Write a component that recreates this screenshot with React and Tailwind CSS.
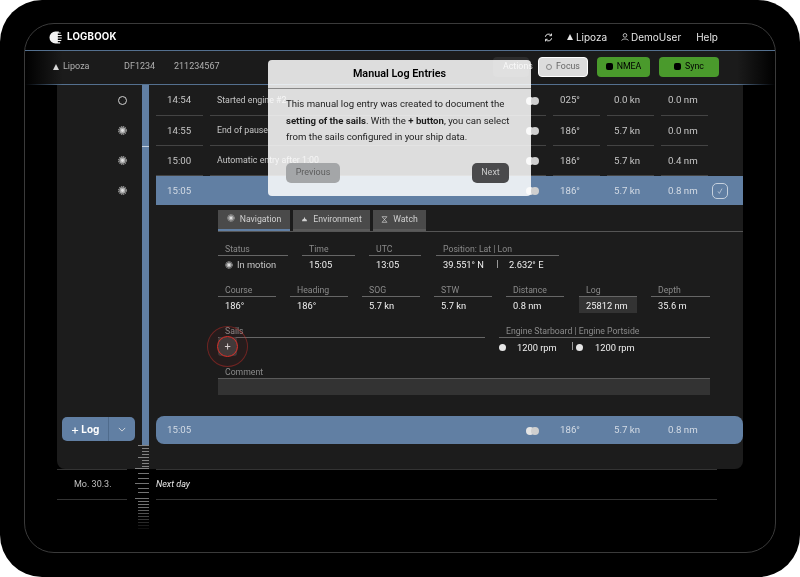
import React from "react";

const font = { fontFamily: 'Roboto, sans-serif' };

function Gear({ className = "w-[9px] h-[9px]" }) {
  return (
    <svg viewBox="0 0 10 10" className={className}>
      <circle cx="5" cy="5" r="4.3" fill="none" stroke="#9c9c9c" strokeWidth="1.2" strokeDasharray="1.5 0.75" />
      <circle cx="5" cy="5" r="3.5" fill="#a8a8a8" />
      <circle cx="5" cy="5" r="1.6" fill="#e0e0e0" />
    </svg>
  );
}

function Toggle() {
  return (
    <div className="flex items-center">
      <span className="w-[8px] h-[8px] rounded-full bg-[#e4e4e4]" />
      <span className="w-[8px] h-[8px] rounded-full bg-[#cfcfcf] -ml-[3px]" />
    </div>
  );
}

const rows = [
  ["14:54", "Started engine #2", "025°", "0.0 kn", "0.0 nm"],
  ["14:55", "End of pause", "186°", "5.7 kn", "0.0 nm"],
  ["15:00", "Automatic entry after 1:00", "186°", "5.7 kn", "0.4 nm"],
];

function LogRow({ r, h }) {
  return (
    <div className={`grid grid-cols-[47px_336px_47px_47px_47px] gap-x-[7px] text-[9.7px] text-[#c6c6c6] ${h}`}>
      <div className="flex items-center pl-[11px] pt-[1px] border-b border-[#444]">{r[0]}</div>
      <div className="flex items-center justify-between pl-[7px] pr-[7px] pt-[1px] border-b border-[#444]">
        <span className="text-[8.8px]">{r[1]}</span>
        <Toggle />
      </div>
      <div className="flex items-center pl-[7px] pt-[1px] border-b border-[#444]">{r[2]}</div>
      <div className="flex items-center pl-[7px] pt-[1px] border-b border-[#444]">{r[3]}</div>
      <div className="flex items-center pl-[7px] pt-[1px] border-b border-[#444]">{r[4]}</div>
    </div>
  );
}

function BlueRow({ children, h, rounded = "" }) {
  return (
    <div className={`grid grid-cols-[47px_336px_47px_47px_47px_36px] gap-x-[7px] bg-[#617fa3] text-[9.7px] text-[#d3dbe5] ${h} ${rounded}`}>
      {children}
    </div>
  );
}

function BlueCells({ t }) {
  return (
    <>
      <div className="flex items-center pl-[11px] pt-[1px]">{t}</div>
      <div className="flex items-center justify-end pr-[7px] pt-[1px]"><Toggle /></div>
      <div className="flex items-center pl-[7px] pt-[1px]">186°</div>
      <div className="flex items-center pl-[7px] pt-[1px]">5.7 kn</div>
      <div className="flex items-center pl-[7px] pt-[1px]">0.8 nm</div>
    </>
  );
}

function Field({ label, w, children, box }) {
  return (
    <div className={`${w} shrink-0`}>
      <div className="h-[13px] pl-[7px] text-[8.7px] leading-[15px] text-[#8a8a8a] border-b border-[#666] box-content">{label}</div>
      <div className={`h-[16px] pl-[7px] pt-[2px] flex items-center text-[9.3px] text-[#f0f0f0] ${box ? "bg-[#333]" : ""}`}>{children}</div>
    </div>
  );
}

function Tab({ icon, label, w, active }) {
  return (
    <div className={`${w} h-[21px] flex items-center justify-center gap-[5px] bg-[#4a4a4a] text-[8.7px] text-[#d0d0d0] border-b-2 ${active ? "border-[#617fa3]" : "border-[#5a5a5a]"}`}>
      {icon}
      <span>{label}</span>
    </div>
  );
}

function Action({ className, dot, children }) {
  return (
    <div className={`h-[20px] rounded-[4px] flex items-center justify-center gap-[4px] text-[8.8px] ${className}`}>
      {dot}
      <span>{children}</span>
    </div>
  );
}

const ticks = [
  [445, 1], [448, 0], [451, 0], [454, 0], [457, 1], [460, 0], [463, 0], [466, 0], [468, 2],
  [473, 1], [478, 1], [483, 2], [488, 1], [492, 1], [498, 2],
  [501, 1], [504, 1], [507, 1], [510, 1], [513, 1], [516, 1], [519, 1], [522, 1], [525, 1], [528, 1],
];

function Ruler() {
  return (
    <svg viewBox="0 0 15 90" className="absolute left-[135px] top-[445px] w-[15px] h-[90px]">
      {ticks.map(([y, kind]) => {
        const x = kind === 2 ? 0 : kind === 1 ? 3 : 7;
        const op = y < 505 ? 0.45 : Math.max(0.06, 0.45 - (y - 505) * 0.017);
        return <rect key={y} x={x} y={y - 445} width={14 - x} height="1" fill="#ffffff" fillOpacity={op} />;
      })}
    </svg>
  );
}

export default function App() {
  return (
    <div className="relative w-[800px] h-[577px] overflow-hidden bg-white blur-[0.3px]" style={font}>
      <div className="w-full h-full bg-black rounded-[42px] pl-[24px] pr-[24px] pt-[23px]">
        <div className="w-[752px] h-[530px] rounded-[30px] border border-[#3a3a3a] flex flex-col">
          {/* top header */}
          <div className="h-[26px] shrink-0 flex items-center pl-[24px] pr-[57px] text-white" style={{ fontFamily: "Inter, sans-serif" }}>
            <svg viewBox="0 0 14 14" className="w-[13px] h-[13px]">
              <path d="M7 .5A6.5 6.5 0 1 0 7 13.5H12V12.2H9.5V10.9H13.2V9.6H9.5V8.2H13.8V6.9H9.5V5.5H13.6V4.2H9.5V2.8H12.6V1.5H10.5V.5Z" fill="#f2f2f2" />
            </svg>
            <span className="ml-[5px] text-[9.7px] font-bold tracking-[0.2px]">LOGBOOK</span>
            <div className="ml-auto flex items-center">
              <svg viewBox="0 0 12 12" className="w-[9px] h-[9px]" fill="none" stroke="#e8e8e8" strokeWidth="1.3">
                <path d="M1.8 5A4.3 4.3 0 0 1 9.5 3.2M10.2 7A4.3 4.3 0 0 1 2.5 8.8" />
                <path d="M10 .8V3.6H7.2M2 11.2V8.4H4.8" />
              </svg>
              <svg viewBox="0 0 8 8" className="ml-[14px] w-[6px] h-[6px]"><path d="M4 0L8 8H0Z" fill="#e8e8e8" /></svg>
              <span className="ml-[3px] text-[10px] text-[#e6e6e6]">Lipoza</span>
              <svg viewBox="0 0 10 10" className="ml-[14px] w-[8px] h-[8px]" fill="none" stroke="#e0e0e0" strokeWidth="1"><circle cx="5" cy="3" r="2.3" /><path d="M.8 9.5C1.4 6.8 8.6 6.8 9.2 9.5" /></svg>
              <span className="ml-[2px] text-[10px] text-[#e6e6e6]">DemoUser</span>
              <span className="ml-[15px] text-[10px] text-[#e6e6e6]">Help</span>
            </div>
          </div>
          <div className="h-px shrink-0 bg-[#54708f]" />
          {/* ship bar */}
          <div className="h-[33px] shrink-0 flex items-center pb-[2px] pl-[28px] pr-[56px] text-[9px] text-[#b0b0b0] bg-[linear-gradient(90deg,transparent,#1b1b1b_5%,#1b1b1b_95%,transparent)]">
            <svg viewBox="0 0 8 8" className="w-[6px] h-[6px]"><path d="M4 0L8 8H0Z" fill="#d8d8d8" /></svg>
            <span className="ml-[4px] w-[61px]">Lipoza</span>
            <span className="w-[50px]">DF1234</span>
            <span>211234567</span>
            <div className="ml-auto flex items-center gap-[9px]">
              <div className="w-[36px] h-[20px] rounded-[4px] bg-[#2d2d2d] pl-[10px] flex items-center text-[8.8px] text-[#d8d8d8] whitespace-nowrap">Actions</div>
              <Action className="w-[50px] bg-[#dcdcdc] border border-white text-[#666]" dot={<span className="w-[6px] h-[6px] rounded-full border border-[#888]" />}>Focus</Action>
              <Action className="w-[53px] bg-[#4a9a2c] text-black" dot={<span className="w-[7px] h-[7px] rounded-[2px] bg-black" />}>NMEA</Action>
              <Action className="w-[60px] bg-[#4a9a2c] text-black" dot={<span className="w-[7px] h-[7px] rounded-[2px] bg-black" />}>Sync</Action>
            </div>
          </div>
          <div className="h-px shrink-0 bg-[linear-gradient(90deg,transparent,#54708f_5%,#54708f_95%,transparent)]" />

          {/* main panel */}
          <div className="ml-[32px] w-[686px] h-[384px] shrink-0 flex bg-[#1c1c1c] rounded-b-[8px]">
            <div className="w-[85px] shrink-0 flex flex-col">
              {[0, 1, 2, 3].map((i) => (
                <div key={i} className="h-[30px] shrink-0 flex items-center justify-end pr-[15px]">
                  {i === 0 ? <span className="w-[9px] h-[9px] rounded-full border border-[#d0d0d0]" /> : <Gear />}
                </div>
              ))}
              <div className="mt-[212px] ml-[5px] w-[73px] h-[24px] flex rounded-[5px] bg-[#617fa3] text-[10px] font-bold text-white" style={{ fontFamily: "Inter, sans-serif" }}>
                <div className="w-[47px] flex items-center justify-center gap-[2px] border-r border-[#4f6b8c]"><span className="text-[13px] font-normal leading-none">+</span>Log</div>
                <div className="flex-1 flex items-center justify-center">
                  <svg viewBox="0 0 10 6" className="w-[8px] h-[5px]" fill="none" stroke="#e8e8e8" strokeWidth="1"><path d="M1 1l4 4 4-4" /></svg>
                </div>
              </div>
            </div>
            <div className="w-[7px] h-[360px] shrink-0 bg-[#617fa3] flex flex-col">
              <div className="mt-[61px] h-px bg-[#c4d0de]" />
            </div>
            <div className="ml-[7px] w-[587px] shrink-0 flex flex-col">
              <LogRow r={rows[0]} h="h-[31px]" />
              <LogRow r={rows[1]} h="h-[30px]" />
              <LogRow r={rows[2]} h="h-[30px]" />
              <BlueRow h="h-[29px]">
                <BlueCells t="15:05" />
                <div className="flex items-center -ml-[3px]">
                  <span className="w-[16px] h-[16px] rounded-[5px] border border-[#c5d0dd] flex items-center justify-center">
                    <svg viewBox="0 0 10 10" className="w-[8px] h-[8px]" fill="none" stroke="#d8e0ea" strokeWidth="0.8"><path d="M2.5 5.5L4.2 8 7.5 2" /></svg>
                  </span>
                </div>
              </BlueRow>

              {/* detail */}
              <div className="h-[211px] shrink-0 pl-[62px] pt-[5px]">
                <div className="flex gap-[3px] border-b border-[#555] h-[22px]">
                  <Tab w="w-[72px]" active label="Navigation" icon={<Gear className="w-[8px] h-[8px] -mt-[3px]" />} />
                  <Tab w="w-[77px]" label="Environment" icon={<svg viewBox="0 0 10 10" className="w-[7px] h-[7px]"><path d="M5 1L6 4A3.5 3 0 0 1 8.5 7.5H1.5A3.5 3 0 0 1 4 4Z" fill="#d0d0d0" /></svg>} />
                  <Tab w="w-[53px]" label="Watch" icon={<svg viewBox="0 0 10 10" className="w-[7px] h-[7px]" fill="none" stroke="#d0d0d0" strokeWidth="1"><path d="M1.5 1H8.5L1.5 9H8.5Z" /></svg>} />
                </div>
                <div className="mt-[10px] flex">
                  <Field w="w-[70px]" label="Status"><Gear className="w-[8px] h-[8px] mr-[4px]" /><span className="text-[#c6c6c6]">In motion</span></Field>
                  <Field w="w-[53px] ml-[14px]" label="Time">15:05</Field>
                  <Field w="w-[52px] ml-[14px]" label="UTC">13:05</Field>
                  <Field w="w-[123px] ml-[15px]" label="Position: Lat | Lon">
                    <span className="w-[54px]">39.551° N</span>
                    <span className="w-px h-[8px] -mt-[3px] bg-[#999]" />
                    <span className="ml-[11px]">2.632° E</span>
                  </Field>
                </div>
                <div className="mt-[11px] flex gap-[14px]">
                  <Field w="w-[58px]" label="Course">186°</Field>
                  <Field w="w-[58px]" label="Heading">186°</Field>
                  <Field w="w-[58px]" label="SOG">5.7 kn</Field>
                  <Field w="w-[58px]" label="STW">5.7 kn</Field>
                  <Field w="w-[58px]" label="Distance">0.8 nm</Field>
                  <Field w="w-[58px] ml-px" label="Log" box>25812 nm</Field>
                  <Field w="w-[59px]" label="Depth">35.6 m</Field>
                </div>
                <div className="mt-[11px] flex gap-[14px]">
                  <div className="w-[267px] shrink-0">
                    <div className="h-[13px] pl-[7px] text-[8.7px] leading-[15px] text-[#8a8a8a] border-b border-[#666] box-content">Sails</div>
                    <div className="mt-[-1px] w-[19px] h-[19px] rounded-[3px] bg-[#3a3a3a] flex items-center justify-center text-[11px] leading-none text-[#d8d8d8]">+</div>
                  </div>
                  <div className="w-[211px] shrink-0">
                    <div className="h-[13px] pl-[7px] text-[8.7px] leading-[15px] text-[#8a8a8a] border-b border-[#666] box-content">Engine Starboard | Engine Portside</div>
                    <div className="h-[17px] pt-[2px] flex items-center text-[9.3px] text-[#f0f0f0]">
                      <span className="w-[7px] h-[7px] rounded-full bg-[#e6e6e6]" />
                      <span className="ml-[11px] w-[55px]">1200 rpm</span>
                      <span className="w-px h-[8px] -mt-[3px] bg-[#999]" />
                      <span className="ml-[3px] w-[7px] h-[7px] rounded-full bg-[#e6e6e6]" />
                      <span className="ml-[12px]">1200 rpm</span>
                    </div>
                  </div>
                </div>
                <div className="mt-[9px] w-[492px]">
                  <div className="h-[13px] pl-[7px] text-[8.7px] leading-[14px] text-[#8a8a8a]">Comment</div>
                  <div className="h-[17px] bg-[#333] border-t border-[#5a5a5a]" />
                </div>
              </div>

              <BlueRow h="h-[28px]" rounded="rounded-[8px]">
                <BlueCells t="15:05" />
              </BlueRow>
            </div>
          </div>

          {/* next day */}
          <div className="ml-[32px] h-[31px] shrink-0 flex text-[9px]">
            <div className="w-[70px] border-y border-[#333] flex items-center pl-[17px] text-[#c0c0c0]">Mo. 30.3.</div>
            <div className="ml-[29px] w-[561px] border-y border-[#333] flex items-center italic text-[#e8e8e8]">Next day</div>
          </div>
        </div>
      </div>

      <Ruler />

      {/* red highlight */}
      <div className="absolute left-[207px] top-[326px] w-[41px] h-[41px] rounded-full border border-[#e0302a]/40 bg-[#e0302a]/5 flex items-center justify-center">
        <div className="w-[21px] h-[21px] rounded-full border-[1.5px] border-[#e0302a]" />
      </div>

      {/* modal */}
      <div className="absolute left-[268px] top-[60px] w-[263px] h-[136px] rounded-[4px] bg-white/85 text-black flex flex-col">
        <div className="h-[29px] shrink-0 flex items-center justify-center text-[10.8px] font-semibold border-b border-[#888]">Manual Log Entries</div>
        <div className="mt-[7px] px-[18px] text-[9.6px] leading-[16.5px] text-[#1c1c1c] whitespace-nowrap">
          This manual log entry was created to document the<br />
          <b>setting of the sails</b>. With the <b>+ button</b>, you can select<br />
          from the sails configured in your ship data.
        </div>
        <div className="mt-auto mb-[13px] px-[18px] pr-[22px] flex justify-between">
          <div className="w-[54px] h-[20px] rounded-[5px] bg-[#a4a6a8] flex items-center justify-center text-[9px] text-[#5c5c5c]">Previous</div>
          <div className="w-[37px] h-[20px] rounded-[5px] bg-[#4a4a4c] flex items-center justify-center text-[9px] text-[#c8c8c8]">Next</div>
        </div>
      </div>
    </div>
  );
}
